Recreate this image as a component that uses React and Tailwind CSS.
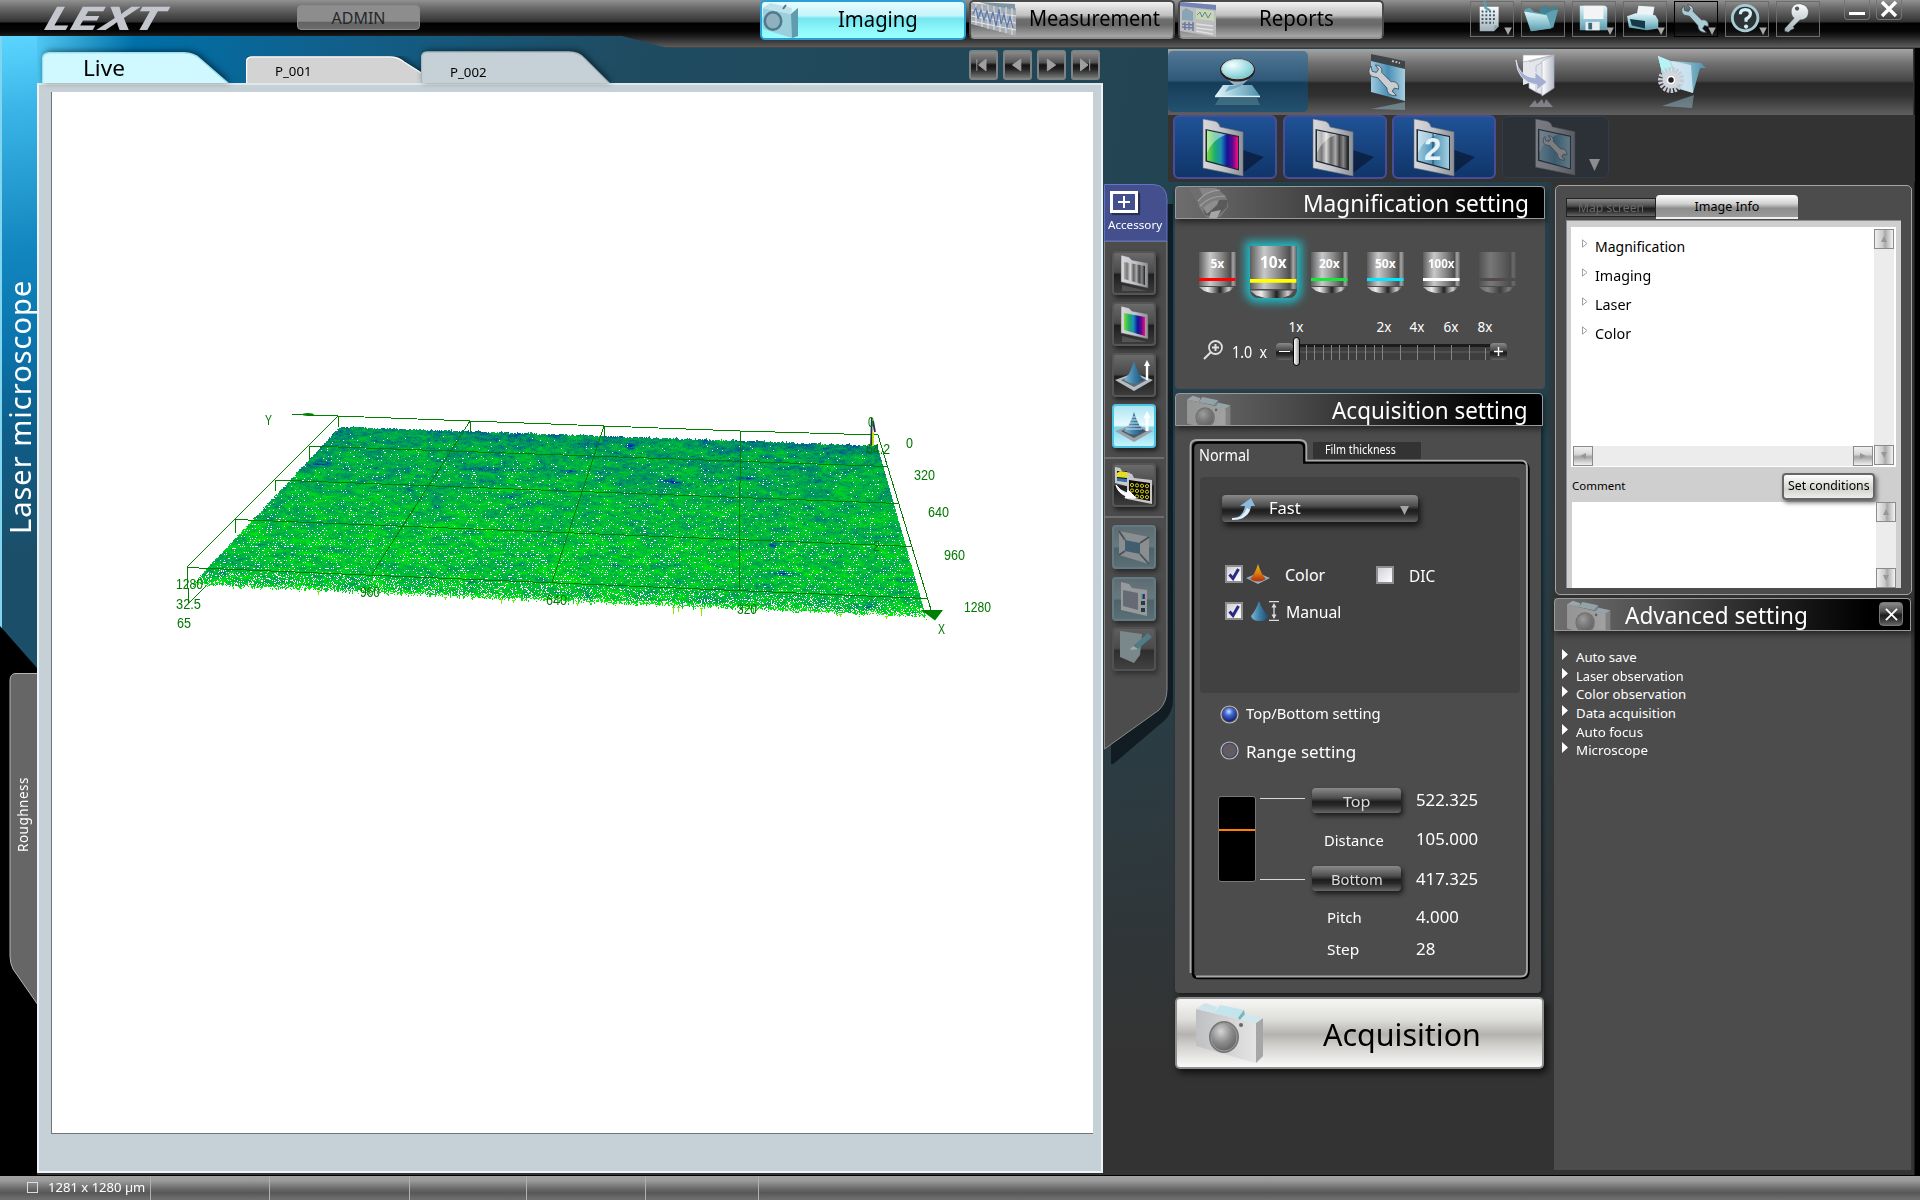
import React, { useLayoutEffect, useRef } from "react";

const ui = "font-['Noto_Sans','Open_Sans',sans-serif]";

/* Single line of text stretched or squeezed to the width of its box. */
function Fit({ className = "", children }) {
  const box = useRef(null);
  const ink = useRef(null);
  useLayoutEffect(() => {
    const w = ink.current.offsetWidth;
    if (w) ink.current.style.transform = `scaleX(${box.current.offsetWidth / w})`;
  });
  return (
    <span ref={box} className={`inline-block shrink-0 whitespace-nowrap text-left ${className}`}>
      <span ref={ink} className="inline-block origin-left whitespace-nowrap">
        {children}
      </span>
    </span>
  );
}

function Defs() {
  const lin = (id, stops, vertical = false) => (
    <linearGradient key={id} id={id} x1="0" y1="0" x2={vertical ? 0 : 1} y2={vertical ? 1 : 0}>
      {stops.map(([o, c]) => (
        <stop key={o} offset={o} stopColor={c} />
      ))}
    </linearGradient>
  );
  return (
    <svg className="absolute h-0 w-0" aria-hidden="true">
      <defs>
        {lin("frame", [[0, "#d8d8dc"], [0.5, "#c2c3c9"], [1, "#8d9096"]])}
        {lin("rainbow", [[0, "#7ddc3c"], [0.25, "#1fae6a"], [0.45, "#1b8fb4"], [0.65, "#12149a"], [0.82, "#5a0a8e"], [1, "#ff0a86"]])}
        {lin("mono", [[0, "#aaa"], [0.15, "#777"], [0.3, "#d8d8d8"], [0.45, "#666"], [0.6, "#aaa"], [0.72, "#444"], [0.85, "#888"], [1, "#222"]])}
        {lin("aqua", [[0, "#e4f7fb"], [0.5, "#93c4d4"], [1, "#4f8fa8"]])}
        {lin("aquaV", [[0, "#dff6fa"], [0.6, "#8cc3cf"], [1, "#5d98a8"]], true)}
        {lin("pane", [[0, "#9dc9dd"], [0.5, "#4a8fb6"], [1, "#a5cfe0"]])}
        {lin("silver", [[0, "#fdfdfd"], [1, "#9fb0b8"]], true)}
        {lin("page", [[0, "#ffffff"], [1, "#b4bac8"]])}
        {lin("cone", [[0, "#7fb7d6"], [0.5, "#3c7ea6"], [1, "#1d4e74"]])}
        {lin("heat", [[0, "#d8c010"], [0.5, "#e08010"], [1, "#b02c10"]], true)}
        {lin("barrel", [[0, "#5c5c5c"], [0.3, "#c9c9c9"], [0.6, "#8a8a8a"], [0.85, "#4e4e4e"], [0.92, "#a8a8a8"], [1, "#5e5e5e"]])}
        {lin("tip", [[0, "#999"], [0.25, "#eee"], [0.6, "#222"], [0.85, "#ccc"], [1, "#555"]])}
        {lin("camFace", [[0, "#bfc0c2"], [1, "#e4e4e4"]])}
        <radialGradient id="lensG" cx=".38" cy=".3" r=".8">
          <stop offset="0" stopColor="#d5d5d5" />
          <stop offset=".5" stopColor="#8d8d8d" />
          <stop offset="1" stopColor="#5b5b5b" />
        </radialGradient>
        <radialGradient id="bubble" cx=".35" cy=".3" r=".8">
          <stop offset="0" stopColor="#f4ffff" />
          <stop offset="1" stopColor="#67c6d0" />
        </radialGradient>
      </defs>
    </svg>
  );
}

function Folder({ fill, className, shadow = true, children }) {
  return (
    <svg viewBox="0 0 63 59" className={className}>
      {shadow && <path d="M41 32L62 39L41 55Z" fill="#0a1d3c" opacity=".8" />}
      <path d="M1 1L14 3.500Q17 5 18 9L41 14V58L1 50Z" fill="url(#frame)" stroke="#6f7278" strokeWidth=".6" />
      <path d="M3.500 11L37 18V52.500L3.500 43.500Z" fill="#1c2a38" />
      <path d="M5 12.500L36 19V51L5 42.500Z" fill={`url(#${fill})`} />
      <path d="M5 12.500L24 16.500Q10 22 5 35Z" fill="#fff" opacity=".45" />
      {children}
    </svg>
  );
}

const wrenchD =
  "M3 1C0 4 0 9 4 11L9 12L18 22C18 27 22 30 27 29L23 25L25 22L29 23C30 18 26 15 22 16L13 7C14 3 11 0 7 0L10 4L8 7L4 6Z";

function Wrench({ x = 0, y = 0, s = 1, fill = "#c4c9ce" }) {
  return <path transform={`translate(${x} ${y}) scale(${s})`} d={wrenchD} fill={fill} stroke="#404850" strokeWidth=".8" />;
}

function Camera({ className, crop }) {
  return (
    <svg viewBox="0 0 68 62" preserveAspectRatio={crop ? "xMidYMin slice" : "xMidYMid meet"} className={className}>
      <path d="M0 7L60 21V61L0 44Z" fill="url(#camFace)" />
      <path d="M60 21L67 16V54L60 61Z" fill="#a5a6a8" />
      <path d="M0 7L9 1L21 5L18 11Z" fill="#cfe4ea" />
      <path d="M18 11L24 3L48 8L42 16Z" fill="#c2e4ec" />
      <path d="M42 16L48 8L49 13L44 18Z" fill="#7fb0be" />
      <path d="M44 18L49 12L67 16L60 21Z" fill="#cfe8ee" />
      <ellipse cx="28" cy="35" rx="15" ry="16" fill="#777" />
      <ellipse cx="28" cy="35" rx="13" ry="14" fill="url(#lensG)" stroke="#999" />
      <circle cx="45" cy="23" r="2" fill="#666" />
    </svg>
  );
}

/* ---------- title bar ---------- */

function ModeButton({ label, active, icon, w, pad = "" }) {
  return (
    <div
      className={
        "relative flex w-[206px] items-center rounded-[5px] border-2 " +
        (active
          ? "h-10 border-[#2a9fd6] bg-[linear-gradient(180deg,#e8fcff_0%,#c4f4fb_38%,#74e4ee_46%,#8cf8fa_75%,#9effff_100%)]"
          : "h-[39px] border-[#4a4a4a] border-b-[#909090] bg-[linear-gradient(180deg,#f2f2f2_0%,#c0c0c0_38%,#6e6e6e_50%,#6a6a6a_65%,#a8a8a8_100%)]")
      }
    >
      <svg viewBox="0 0 46 36" className="h-9 w-[46px] shrink-0">
        {icon}
      </svg>
      <div className={`-mt-[3px] flex flex-1 justify-center text-[21px] leading-[28px] text-black ${pad} ${ui}`}>
        <Fit className={w}>{label}</Fit>
      </div>
    </div>
  );
}

const modeIcons = {
  cam: (
    <g>
      <path d="M1 6L29 12L36 6V34L30 36L1 27Z" fill="#9ccfdc" />
      <path d="M29 12L36 6V34L30 36Z" fill="#5f9cb0" />
      <path d="M1 6L8 1L30 6L29 12Z" fill="#bfe2ea" />
      <ellipse cx="11" cy="19" rx="9.500" ry="10" fill="#50788a" />
      <ellipse cx="11" cy="19" rx="7" ry="7.500" fill="#8fb0be" />
      <path d="M21 7L24 3" stroke="#507888" strokeWidth="2" />
    </g>
  ),
  chart: (
    <g>
      <path d="M0 1L45 6V34L0 22Z" fill="#a8adb4" />
      <path d="M8 0L44 2V8L18 3Z" fill="#7d98a4" />
      <path d="M5 2V23M11 3V25M17 3V27M23 4V28M29 5V30M35 5V31M41 6V33M0 8L45 14M0 14L45 21M0 19L45 28" stroke="#e4e6ea" strokeWidth="1" />
      <path d="M2 12L5 6L7 17L10 8L13 18L16 9L19 20L22 10L25 24L28 7L30 22L33 12L36 25L39 15L42 26" fill="none" stroke="#5878b0" strokeWidth="1.200" />
    </g>
  ),
  report: (
    <g>
      <path d="M0 0L36 3V35L0 29Z" fill="#bcbdc0" />
      <path d="M0 0L36 3V8L0 4Z" fill="#7284b4" />
      <path d="M2 9L6 6L13 10V19L2 18Z" fill="#87a5b4" />
      <path d="M16 7L34 9V19L16 17Z" fill="#c9d6b4" />
      <path d="M17 13L20 10L22 15L25 10L28 16L31 11" fill="none" stroke="#60849a" />
      <path d="M2 22L13 23M2 25L13 26M5 20V28M9 20V28M13 20V29" stroke="#6a7a9c" strokeWidth="1.500" />
      <path d="M16 22L33 24M16 26L33 28M16 29L33 32" stroke="#e0e0e0" strokeWidth="1.500" />
    </g>
  ),
};

function ToolButton({ children, arrow, className = "border-[#6c6c6c]" }) {
  return (
    <div className={`relative h-9 w-11 border bg-[#ffffff08] ${className}`}>
      <svg viewBox="0 0 44 36" className="h-full w-full overflow-visible">
        {children}
        {arrow && <path d="M35 27H43L39 35Z" fill="#a8a8a8" />}
      </svg>
    </div>
  );
}

function Header() {
  return (
    <header className="relative z-10 flex h-12 shrink-0 items-start bg-[linear-gradient(180deg,#919191_0,#6a6a6a_8px,#3a3a3a_20px,#303030_22px,#000_23px,#050505_31px,#1c1c1c_36px,#5c5c5c_47px,#303030_48px)] [clip-path:polygon(0_0,1920px_0,1920px_48px,668px_48px,622px_36px,0_36px)]">
      <div className="ml-[47px] mt-[1px] w-[125px] skew-x-[-18deg]">
        <Fit className="w-[118px] font-['Inter','Liberation_Sans',sans-serif] text-[32px] font-extrabold italic leading-[36px] text-[#c4c6cd]">
          LEXT
        </Fit>
      </div>
      <div className={`ml-[125px] mt-[5px] flex h-[25px] w-[123px] items-center justify-center rounded-sm border border-[#8a8a8a] bg-[linear-gradient(180deg,#8d8d8d_0%,#8d8d8d_66%,#636363_70%,#6c6c6c_100%)] text-[16px] leading-[22px] text-[#26262b] ${ui}`}>
        <Fit className="w-[54px]">ADMIN</Fit>
      </div>
      <nav className="ml-[340px] flex gap-[3px]">
        <ModeButton label="Imaging" active icon={modeIcons.cam} w="w-[80px]" pad="pr-4" />
        <ModeButton label="Measurement" icon={modeIcons.chart} w="w-[131px]" pad="pr-[2px]" />
        <ModeButton label="Reports" icon={modeIcons.report} w="w-[75px]" pad="pr-4" />
      </nav>
      <div className="ml-[86px] mt-px flex gap-[7px]">
        <ToolButton arrow>
          <path d="M9 5H29V26L24 31H9Z" fill="url(#silver)" />
          <path d="M24 31V25H29Z" fill="#8fa4ac" />
          <path d="M11 10H27M11 14H27M11 18H27M11 22H24" stroke="#3c5a68" strokeWidth="2" strokeDasharray="2 2" />
          <path d="M14 -1L15 6L20 9" stroke="#58a0b4" strokeWidth="2.500" fill="none" />
        </ToolButton>
        <ToolButton>
          <path d="M18 8L25 3L27 8L36 4L33 14L20 16Z" fill="#3f8494" />
          <path d="M2 8L8 6L12 10L24 13L32 9L38 8L33 27L10 31Z" fill="#5e9fb0" />
          <path d="M2 10L26 14L31 28L9 31Z" fill="url(#aquaV)" />
        </ToolButton>
        <ToolButton arrow>
          <path d="M7 4H34L36 6V30H7Z" fill="url(#aquaV)" />
          <path d="M11 4H32V18H11Z" fill="#f4f4f6" />
          <path d="M13 21H28V30H13Z" fill="#e8eef0" />
          <path d="M16 22H20V29H16Z" fill="#35697c" />
        </ToolButton>
        <ToolButton arrow>
          <path d="M15 4L32 5L30 17L13 15Z" fill="#eef4f6" />
          <path d="M3 15L12 12L33 14L36 19V28L24 30L5 27Z" fill="url(#aquaV)" />
          <path d="M6 18L22 20V28L8 25Z" fill="#163a48" />
        </ToolButton>
        <ToolButton arrow className="border-black">
          <Wrench x={6} y={3} s={1} fill="#a9cbd4" />
        </ToolButton>
        <ToolButton arrow>
          <circle cx="20" cy="17" r="13.500" fill="#2c3438" stroke="#a9ccd4" strokeWidth="3" />
          <path d="M15 13Q15 8 20 8Q26 8 25.500 13Q25 16 21 18V21" fill="none" stroke="#d5eef2" strokeWidth="3.400" />
          <circle cx="21" cy="26" r="2.200" fill="#d5eef2" />
        </ToolButton>
        <ToolButton>
          <path d="M15 8Q17 1 25 2Q34 4 33 12Q32 19 24 19L17 26L18 28L14 30L12 32L8 31V28L18 17Q14 14 15 8Z" fill="url(#silver)" stroke="#444" strokeWidth=".5" />
          <circle cx="21" cy="7" r="2.200" fill="#555" />
        </ToolButton>
      </div>
      <div className="ml-[24px] flex gap-[6px]">
        <div className="h-5 w-[26px] rounded-b border border-t-0 border-[#747474] px-[4px] pt-[12px]">
          <div className="h-[3px] bg-white" />
        </div>
        <div className="h-5 w-[26px] rounded-b border border-t-0 border-[#747474]">
          <svg viewBox="0 0 24 19" className="h-full w-full">
            <path d="M5 2L19 16M19 2L5 16" stroke="#fff" strokeWidth="3.400" />
          </svg>
        </div>
      </div>
    </header>
  );
}

/* ---------- left rail ---------- */

function Rail() {
  return (
    <aside className={`-mt-3 flex w-[37px] shrink-0 flex-col text-white ${ui}`}>
      <div className="h-[637px] bg-black">
        <div className="flex h-[632px] items-start justify-center border-l-2 border-[#7fd6ee] bg-[linear-gradient(172deg,#5cd6ff_0%,#3ab4e6_12%,#1286bf_34%,#0a72aa_50%,#0e5e8a_62%,#1b4e68_82%)] [clip-path:polygon(0_0,100%_0,100%_100%,0_590px)]">
          <div className="mt-[243px] flex h-[256px] w-[35px] rotate-180 items-center justify-center text-[29px] leading-[35px] [writing-mode:vertical-rl]">
            <span className="whitespace-nowrap tracking-[1px]">Laser microscope</span>
          </div>
        </div>
      </div>
      <div className="relative flex h-[502px] items-center justify-center bg-black">
        <svg viewBox="0 0 37 332" className="absolute left-0 top-0 h-[332px] w-[37px]">
          <path d="M38 .5H15Q10 1 10 8V283Q10 290 13 296L38 332Z" fill="#666" stroke="#b4b4b4" />
        </svg>
        <div className="relative -mt-[219px] ml-[8px] flex h-[90px] w-6 rotate-180 items-center justify-center text-[13.500px] leading-6 [writing-mode:vertical-rl]">
          <span className="whitespace-nowrap tracking-[0.5px]">Roughness</span>
        </div>
      </div>
    </aside>
  );
}

/* ---------- surface plot ---------- */

const streaks = [
  [303, 463, 38, 3, 0.5], [363, 467, 18, 2, 0.6], [457, 469, 110, 2.5, 0.5], [560, 471, 14, 2, 1],
  [607, 435, 18, 2.5, 0.8], [662, 481, 18, 2.5, 0.9], [733, 478, 27, 2, 0.6], [803, 481, 22, 2, 0.4],
  [607, 565, 110, 2.5, 0.5], [767, 573, 36, 2, 1], [887, 579, 30, 2.5, 0.8], [503, 555, 54, 3, 0.35],
  [310, 550, 46, 2.5, 0.4], [228, 540, 22, 3, 0.5], [755, 587, 20, 3, 0.4], [628, 446, 5, 3, 0.9],
  [810, 460, 40, 4, 0.3], [845, 505, 12, 3, 0.4], [467, 581, 8, 3, 0.9], [480, 445, 60, 4, 0.3],
  [220, 571, 6, 5, 0.6], [405, 488, 8, 3, 0.6], [500, 496, 20, 4, 0.4], [865, 606, 8, 3, 0.7],
  [320, 445, 40, 5, 0.3], [770, 545, 6, 3, 0.8], [430, 505, 10, 4, 0.4], [750, 508, 30, 3, 0.3],
  [690, 600, 40, 3, 0.3], [270, 555, 30, 3, 0.35],
];

function paintSurface(canvas) {
  const W = 760, H = 220, X0 = 180, Y0 = 415;
  const ctx = canvas.getContext("2d");
  const img = ctx.createImageData(W, H);
  let seed = 90210;
  const rnd = () => {
    seed = (seed * 1664525 + 1013904223) >>> 0;
    return seed / 4294967296;
  };
  const lattice = Array.from({ length: 65536 }, rnd);
  const at = (i, j) => lattice[((j & 255) << 8) | (i & 255)];
  const smooth = (x, y) => {
    const i = Math.floor(x), j = Math.floor(y);
    const u = x - i, v = y - j;
    return (at(i, j) * (1 - u) + at(i + 1, j) * u) * (1 - v) + (at(i, j + 1) * (1 - u) + at(i + 1, j + 1) * u) * v;
  };
  const ramp = [[10, 20, 215], [0, 80, 155], [0, 132, 112], [0, 172, 72], [0, 204, 40], [0, 238, 8]];
  const put = (x, y, c) => {
    const k = (y * W + x) * 4;
    img.data[k] = c[0];
    img.data[k + 1] = c[1];
    img.data[k + 2] = c[2];
    img.data[k + 3] = 255;
  };
  for (let px = 0; px < W; px++) {
    const jTop = Math.round(rnd() * 1.6);
    const jBot = Math.round(rnd() * rnd() * 4);
    for (let py = 0; py < H; py++) {
      const x = px + X0, y = py + Y0;
      const top = 427 + (x - 338) * 0.0352 - jTop;
      const bottom = 585 + (x - 205) * 0.0444 + jBot - 1;
      const left = 338 - (y - 427) * 0.938 + rnd() * 2;
      const right = 877 + (y - 446) * 0.2865;
      if (y < top || y > bottom || x < left || x > right) continue;
      const d = Math.min(1, Math.max(0, (y - top) / (bottom - top)));
      let t = 0.53 + 0.19 * Math.min(1, d * 1.4);
      t += (smooth(x / 15, y / 4) - 0.5) * 0.3 + (smooth(x / 4 + 40, y / 1.6 + 80) - 0.5) * 0.36 + (rnd() - 0.5) * 0.2;
      if (y - top < 9) t -= 0.08;
      for (const [sx, sy, sw, sh, amt] of streaks) {
        const dx = (x - sx - sw / 2) / (sw / 2 + 3), dy = (y - sy) / (sh + 1);
        const q = 1 - dx * dx - dy * dy;
        if (q > 0) t -= amt * 0.55 * q * (0.15 + 1.1 * smooth(x / 3, y));
      }
      if (y > bottom - 4) t += 0.2;
      t = Math.min(0.999, Math.max(0, t)) * 5;
      const i = Math.floor(t), f = t - i;
      const c = ramp[i].map((a, n) => Math.round(a + (ramp[i + 1][n] - a) * f));
      const hole = y - top > 5 && rnd() < 0.018 + 0.16 * d && ((y & 1) === 0 || d > 0.9);
      const fringe = y > bottom - 4 && rnd() < 0.2;
      put(px, py, hole || fringe ? [255, 255, 255] : c);
    }
  }
  for (const [x, len] of [[318, 4], [501, 5], [577, 3], [673, 7], [678, 5], [701, 8], [513, 3], [886, 3], [840, 3], [445, 3]]) {
    const b = Math.round(586 + (x - 205) * 0.0444);
    for (let k = 0; k < len; k++) put(x - X0, b - Y0 + k, [130, 235, 0]);
    put(x - X0 - 1, b - Y0, [90, 240, 0]);
    put(x - X0 + 1, b - Y0, [90, 240, 0]);
  }
  ctx.putImageData(img, 0, 0);
}

const axisLabels = [
  [906, 448, "0", 7], [914, 480, "320", 21], [928, 517, "640", 21], [944, 560, "960", 21], [964, 612, "1280", 27],
  [868, 427, "0", 6], [866, 454, "64.2", 24], [873, 551, "2", 7], [176, 589, "1280", 27], [176, 609, "32.5", 25],
  [177, 628, "65", 14], [360, 597, "960", 20], [546, 605, "640", 21], [737, 614, "320", 20],
  [265, 425, "Y", 7], [938, 634, "X", 7],
];

function SurfacePlot() {
  const ref = useRef(null);
  useLayoutEffect(() => paintSurface(ref.current), []);
  return (
    <div className="relative h-full w-full bg-white">
      <canvas ref={ref} width="760" height="220" className="absolute left-[128px] top-[323px]" />
      <svg viewBox="52 92 1040 1040" className="absolute left-0 top-0 h-[1040px] w-[1040px]">
        <path
          d="M292 414.500L338 416L470 421L604 426L740 431L878 435M309 446L887 466.500M275 480L899 503.500M235 519.500L912 546.500M187 567.500L927 598.500M338 416L187 567M470 421L372 574M604 426L552 582M740.500 431L739 591M878 435L932 613M338.500 416V427M470.500 421V432M604.500 426V437M309.500 446V459M275.500 480V491M235.500 519V533M187.500 567V580L189 603L206 586"
          fill="none"
          stroke="#008000"
          strokeWidth="1"
          shapeRendering="crispEdges"
        />
        <ellipse cx="308" cy="414.500" rx="6" ry="1.500" fill="#008000" />
        <path d="M921 610H943L935 620.500Z" fill="#008000" />
        <path d="M871 420L870 446H873L872 418Z" fill="#603090" />
        <path d="M872 430L871 446H874L874 433Z" fill="#c8e010" />
        <path d="M873 421L875 432" stroke="#302060" strokeWidth="1.800" />
        <path d="M871.500 418V445" stroke="#0a4a2a" strokeWidth="1.200" />
        {axisLabels.map(([x, y, s, w]) => (
          <text key={`${x}-${y}`} x={x} y={y} textLength={w} lengthAdjust="spacingAndGlyphs" fill="#007800" className="font-['Liberation_Sans',sans-serif] text-[14px]">
            {s}
          </text>
        ))}
      </svg>
    </div>
  );
}

function DocTab({ className, path, stroke, fill, w, children }) {
  return (
    <div className={`relative ${className} ${ui} text-black`}>
      <svg viewBox={`0 0 ${w} 32`} preserveAspectRatio="none" className="absolute inset-0 h-full w-full drop-shadow-[2px_-1px_3px_rgba(0,0,0,0.55)]">
        <path d={path} fill={fill} stroke={stroke} strokeWidth="1.400" />
      </svg>
      <div className="relative">{children}</div>
    </div>
  );
}

function Workspace() {
  const nav = [
    <path key="a" d="M7 8V22M18 8V22L9 15Z" />,
    <path key="b" d="M19 8V22L9 15Z" />,
    <path key="c" d="M10 8V22L20 15Z" />,
    <path key="d" d="M9 8V22L18 15ZM20 8V22" />,
  ];
  return (
    <section className="flex w-[1066px] shrink-0 flex-col">
      <div className="flex h-[35px] items-end">
        <DocTab className="ml-[5px] h-[31px] w-[188px] pl-[41px] pt-[1px] text-[21px] leading-[30px]" w={188} fill="#d0f8ff" stroke="#9fe0ee" path="M.5 33V7Q1 1 7 .8H142Q152 1 158 7L187 33Z">
          <Fit className="w-[42px]">Live</Fit>
        </DocTab>
        <DocTab className="ml-[16px] h-[27px] w-[175px] overflow-hidden pl-[29px] pt-[7px] text-[12.500px] leading-[18px]" w={175} fill="#d3d3d3" stroke="#fff" path="M.5 33V6Q1 1 6 1H144Q152 1 158 7L178 22V33Z">
          <Fit className="w-[37px]">P_001</Fit>
        </DocTab>
        <DocTab className="h-8 w-[190px] pl-[29px] pt-[13px] text-[12.500px] leading-[18px]" w={190} fill="#c5d1d6" stroke="#a9b9bf" path="M.5 33V6Q1 1 7 1H148Q158 1 164 8L189 33Z">
          <Fit className="w-[37px]">P_002</Fit>
        </DocTab>
        <div className="mb-[3px] ml-auto mr-[3px] flex gap-[5px]">
          {nav.map((n, i) => (
            <div key={i} className="h-[30px] w-[29px] rounded-[3px] border-2 border-[#7d8284] bg-[linear-gradient(180deg,#8a8a8a_0%,#555_40%,#141414_50%,#222_65%,#777_100%)]">
              <svg viewBox="0 0 30 30" className="h-full w-full" fill="#a0a0a0" stroke="#a0a0a0" strokeWidth="1.200">
                {n}
              </svg>
            </div>
          ))}
        </div>
      </div>
      <div className="h-[1090px] border-2 border-[#eef3f5] border-t-[#dfe8ea] bg-[#c5d1d6] pl-[12px] pt-[7px]">
        <div className="h-[1042px] w-[1042px] border-b border-l border-[#6f7678]">
          <SurfacePlot />
        </div>
      </div>
    </section>
  );
}

/* ---------- accessory strip ---------- */

function StripButton({ className = "", tone = "dark", children }) {
  const tones = {
    dark: "border-[#555] bg-[linear-gradient(180deg,#6a6a6a_0%,#4a4a4a_48%,#1e1e1e_54%,#3c3c3c_100%)]",
    lit: "border-[#4bc4e4] bg-[linear-gradient(180deg,#aee4f2_0%,#e6fbff_48%,#7cd6ec_54%,#c8f4fc_100%)]",
    off: "border-[#6b8590] bg-[linear-gradient(180deg,#62757c_0%,#6f858c_48%,#4f6872_54%,#5f7880_100%)]",
  };
  return (
    <div className={`h-11 w-11 rounded-[4px] border-2 shadow-[2px_3px_5px_rgba(0,0,0,0.6)] ${tones[tone]} ${className}`}>
      <svg viewBox="0 0 40 40" className="h-full w-full">
        {children}
      </svg>
    </div>
  );
}

const miniFolder = (fill) => (
  <g>
    <path d="M7 2L15 4L18 7L34 10V35L7 29Z" fill="url(#frame)" stroke="#555" strokeWidth=".5" />
    <path d="M10 9L31 13V32L10 26Z" fill={`url(#${fill})`} />
    <path d="M8 32L33 38H8Z" fill="#fff" opacity=".15" />
  </g>
);

function Accessory() {
  return (
    <section className="relative mt-[136px] h-[566px] w-[65px] shrink-0">
      <svg viewBox="0 0 75 580" className="absolute left-0 top-0 h-[580px] w-[75px]">
        <path d="M8 20H70V515Q70 528 62 536L8 582Z" fill="#0a1218" opacity=".75" />
        <path d="M1.500 57H64V505Q64 518 56 526L1.500 565Z" fill="#4c4c4c" stroke="#8a8a8a" />
        <path d="M1.500 57V.5H50Q64 1 64 16V57Z" fill="#44508e" stroke="#6474c0" />
        <path d="M2 274H61M2 333H61" stroke="#6e6e6e" strokeWidth="2" />
      </svg>
      <div className={`relative flex flex-col items-start text-white ${ui}`}>
        <div className="ml-[7px] mt-[7px] flex h-[22px] w-7 items-center justify-center border-[3px] border-white shadow-[2px_2px_1px_rgba(0,0,0,0.4)]">
          <svg viewBox="0 0 12 12" className="h-3 w-3">
            <path d="M0 6H12M6 0V12" stroke="#fff" strokeWidth="2" />
          </svg>
        </div>
        <div className="ml-[5px] mt-[2px] text-[11px] leading-[20px]">
          <Fit className="w-[54px]">Accessory</Fit>
        </div>
        <div className="ml-[9px] mt-[16px] flex flex-col gap-[7px]">
          <StripButton>{miniFolder("mono")}</StripButton>
          <StripButton>{miniFolder("rainbow")}</StripButton>
          <StripButton>
            <path d="M1 25L20 18L39 25L20 36Z" fill="#b7bcc2" />
            <path d="M7 25L20 20L33 25L20 32Z" fill="#5c6b76" />
            <path d="M10 25Q16 20 20 6Q24 20 30 25Q20 32 10 25Z" fill="url(#cone)" />
            <path d="M33 25V10" stroke="#fff" strokeWidth="2.400" />
            <path d="M30 11L33 5L36 11Z" fill="#fff" />
          </StripButton>
          <StripButton tone="lit">
            <path d="M1 25L20 18L39 25L20 36Z" fill="#9ba1a8" />
            <path d="M7 25L20 20L33 25L20 32Z" fill="#4c5b66" />
            <path d="M10 25Q16 20 20 6Q24 20 30 25Q20 32 10 25Z" fill="url(#cone)" />
            <path d="M18 11H22M17 14H23M16 17H24M14 20H26M12 23H28" stroke="#d8e4ea" />
            <path d="M33 25V10" stroke="#fff" strokeWidth="3" />
            <path d="M29.500 12L33 5L36.500 12Z" fill="#fff" />
          </StripButton>
        </div>
        <StripButton className="ml-[9px] mt-[15px]">
          <path d="M1 2L6 3L8 6L16 8V22L1 18Z" fill="#c9c9c9" />
          <path d="M3 6L13 6V17L3 15Z" fill="#111" />
          <path d="M3 8L6 6L13 7V13L3 12Z" fill="#e6dc20" />
          <path d="M3 13L13 14V17L3 16Z" fill="#3070b0" />
          <path d="M13 8L18 9L20 13L38 15V39L13 34Z" fill="#c6c6ca" />
          <path d="M15 15L36 18V36L15 32Z" fill="#0a0a0a" />
          {[20, 25.5, 31].map((y) =>
            [18, 23, 28, 33].map((x) => (
              <circle key={`${x}-${y}`} cx={x} cy={y + (x - 18) * 0.08} r="1.600" fill="none" stroke="#d8d010" strokeWidth="1" />
            ))
          )}
          <path d="M2 20Q6 26 13 28L14 25L22 33L11 33L12 31Q4 28 2 20Z" fill="#fff" stroke="#fff" />
        </StripButton>
        <div className="ml-[9px] mt-[18px] flex flex-col gap-[8px] opacity-80">
          <StripButton tone="off">
            <path d="M5 4L35 10V37L5 28Z" fill="#9a9fa2" />
            <path d="M11 13L26 16V27L11 24Z" fill="#3f6378" />
            <path d="M5 4L11 13M35 10L26 16M35 37L26 27M5 28L11 24" stroke="#4a5358" strokeWidth="1.800" />
          </StripButton>
          <StripButton tone="off">
            <path d="M7 3L15 5L18 9L33 11V37L7 31Z" fill="#a9aeb2" />
            <path d="M9 11L24 14V31L9 27Z" fill="#6c7280" />
            <path d="M27 15H31V20H27Z" fill="url(#rainbow)" />
            <path d="M27 22H31V26H27ZM27 29H31V33H27Z" fill="#234" />
          </StripButton>
          <StripButton className="-mt-[2px] opacity-80">
            <path d="M6 2L28 5L26 26L20 34L6 28Z" fill="#97aab0" />
            <path d="M19 17L34 4L38 8L24 20Z" fill="#5596a6" />
            <path d="M19 17L24 20L16 21Z" fill="#ddd" />
          </StripButton>
        </div>
      </div>
    </section>
  );
}

/* ---------- right-hand controls ---------- */

const barDark = "bg-[linear-gradient(180deg,#8a8a8a_0%,#4e4e4e_40%,#1d1d1d_55%,#2a2a2a_70%,#666_100%)]";

function PanelHeader({ className = "", children }) {
  return (
    <div className={`relative flex h-[33px] items-center rounded-t-[4px] border border-[#9a9a9a] bg-[linear-gradient(90deg,#6e6e6e_0%,#4c4c4c_30%,#1c1c1c_65%,#000_88%)] shadow-[1px_3px_6px_rgba(0,0,0,0.55)] ${className}`}>
      {children}
    </div>
  );
}

function Lens({ label, ring, large, off }) {
  const size = large
    ? "-mx-[5px] h-[52px] w-[47px] shadow-[0_0_8px_5px_#22b6c0] rounded-b-[8px] bg-[#4c4c4c]"
    : "h-[41px] w-[37px]";
  return (
    <div className={`relative ${size} ${off ? "opacity-35" : ""}`}>
      <svg viewBox="0 0 37 41" preserveAspectRatio="none" className="h-full w-full">
        <path d="M0 0H37V34H0Z" fill="url(#barrel)" />
        <path d="M0 35H35L31 39L25 41H12L5 39Z" fill="url(#tip)" />
        <path d="M0 26H36.500V29H0Z" fill={ring} />
      </svg>
      <div className={`absolute inset-x-0 text-center font-bold text-white ${ui} ${large ? "top-[5px] text-[16px] leading-[22px]" : "top-[3px] text-[12px] leading-[18px]"}`}>
        <Fit className={label.length > 3 ? "w-[27px]" : label.length > 2 ? (large ? "w-[27px]" : "w-[21px]") : "w-[14px]"}>{label}</Fit>
      </div>
    </div>
  );
}

function Magnification() {
  return (
    <section className={`flex h-[203px] w-[370px] flex-col rounded-b bg-[#4c4c4c] text-white ${ui}`}>
      <PanelHeader className="justify-end overflow-hidden pr-[15px] pt-[2px] text-[23.500px] leading-[31px]">
        <svg viewBox="0 0 42 30" className="-mt-[2px] ml-[13px] mr-auto h-[30px] w-[42px] shrink-0">
          <path d="M0 0H27L36 8L12 20Z" fill="#848484" />
          <path d="M0 0H10L18 16L12 20Z" fill="#6e6e6e" />
          <path d="M9 12Q16 3 30 2L37 9Q40 14 39 19L31 29H17L10 19Z" fill="#7c7c7c" />
          <path d="M9 13Q17 3 31 2M11 18Q20 8 36 8" fill="none" stroke="#a2a2a2" strokeWidth="1.200" />
          <path d="M14 20Q24 10 39 12L38 19L28 29L16 27Z" fill="#5a5a5a" />
          <path d="M14 20Q22 12 30 12L28 17L18 26Z" fill="#8e8e8e" />
          <path d="M22 24L32 22L28 30H20Z" fill="#a6a6a6" />
        </svg>
        <Fit className="w-[226px]">Magnification setting</Fit>
      </PanelHeader>
      <div className="ml-6 mt-[27px] flex h-[52px] items-center gap-[19px]">
        <Lens label="5x" ring="#ff0000" />
        <Lens label="10x" ring="#ffff00" large />
        <Lens label="20x" ring="#12e83a" />
        <Lens label="50x" ring="#00e8ff" />
        <Lens label="100x" ring="#ffffff" />
        <Lens label="" ring="#5c4a44" off />
      </div>
      <div className="ml-[104px] mt-[21px] flex h-4 items-center text-center text-[13.500px] leading-4">
        <div className="w-[34px]">1x</div>
        <div className="ml-[54px] w-[34px]">2x</div>
        <div className="ml-[-1px] w-[34px]">4x</div>
        <div className="w-[34px]">6x</div>
        <div className="w-[34px]">8x</div>
      </div>
      <div className="ml-7 mt-[2px] flex h-[29px] items-center">
        <svg viewBox="0 0 20 20" className="-mt-1 h-5 w-5" fill="none" stroke="#e0e0e0" strokeWidth="1.800">
          <circle cx="12.500" cy="7.500" r="6.500" />
          <path d="M8 12L1 19M9 7.500H16M12.500 4V11" strokeWidth="2" />
        </svg>
        <div className="ml-[9px] text-[15.500px] leading-5">
          <Fit className="w-[35px]">1.0&nbsp; x</Fit>
        </div>
        <div className="relative ml-[9px] flex h-4 items-center rounded-sm">
          <div className={`flex h-[17px] w-[17px] items-center justify-center rounded-sm ${barDark}`}>
            <div className="h-px w-[11px] bg-white" />
          </div>
          <svg viewBox="0 0 197 16" className="h-4 w-[197px]">
            <path d="M0 0H197V16H0Z" fill="#3e3e3e" />
            <path d="M0 0H197V3H0Z" fill="#1c1c1c" />
            <path d="M0 8H197" stroke="#606060" />
            <path d="M13.500 1V16M21.500 1V16M30.500 1V16M38.500 1V16M46.500 1V16M55.500 1V16M63.500 1V16M72.500 1V16M81.500 1V16M89.500 1V16M107.500 1V16M124.500 1V16M141.500 1V16M158.500 1V16M176.500 1V16M192.500 4V16" stroke="#858585" />
          </svg>
          <div className={`flex h-[17px] w-[17px] items-center justify-center rounded-sm ${barDark}`}>
            <svg viewBox="0 0 10 10" className="h-[9px] w-[9px]">
              <path d="M0 5H10M5 0V10" stroke="#fff" strokeWidth="1.600" />
            </svg>
          </div>
          <div className="absolute -top-[7px] left-[17px] h-[29px] w-[7px] rounded-full border-[1.5px] border-black bg-[linear-gradient(90deg,#fff,#9a9a9a)]" />
        </div>
      </div>
    </section>
  );
}

function Check({ on }) {
  return (
    <div className="h-[18px] w-[18px] shrink-0 border-2 border-[#8e8e8e] bg-[linear-gradient(135deg,#cfd0d8,#fff)]">
      {on && (
        <svg viewBox="0 0 14 14" className="h-full w-full">
          <path d="M2.500 7.500L6 11.500L11.500 2" fill="none" stroke="#2a2a84" strokeWidth="3" />
        </svg>
      )}
    </div>
  );
}

function Radio({ on }) {
  return (
    <svg viewBox="0 0 20 20" className="h-[19px] w-[19px] shrink-0">
      <defs>
        <radialGradient id="ball" cx=".45" cy=".3" r=".7">
          <stop offset="0" stopColor="#c8e4ff" />
          <stop offset=".4" stopColor="#4468d8" />
          <stop offset="1" stopColor="#101c68" />
        </radialGradient>
      </defs>
      <circle cx="10" cy="10" r="9" fill="#5a5458" stroke="#bdbdbd" strokeWidth="1.200" />
      {on ? <circle cx="10" cy="10" r="7.500" fill="url(#ball)" /> : <circle cx="10" cy="10" r="7.500" fill="#625c60" stroke="#3c4674" />}
    </svg>
  );
}

function SmallButton({ label, w }) {
  return (
    <div className={`flex h-[25px] w-[89px] shrink-0 items-center justify-center rounded-[4px] pt-px text-[15px] leading-[22px] text-[#dcdcdc] shadow-[2px_3px_5px_rgba(0,0,0,0.65)] ${barDark}`}>
      <Fit className={w}>{label}</Fit>
    </div>
  );
}

function Acquisition() {
  return (
    <section className={`flex h-[600px] w-[368px] flex-col text-white ${ui}`}>
      <PanelHeader className="shrink-0 overflow-visible pr-[14px] text-[23.500px] leading-[31px]">
        <Camera crop className="ml-[11px] mr-auto h-[30px] w-[44px] opacity-50" />
        <Fit className="mt-px w-[196px]">Acquisition setting</Fit>
      </PanelHeader>
      <div className="h-[567px] w-[366px] rounded-b bg-[#4c4c4c] pl-[14px] pt-[13px] shadow-[2px_2px_4px_rgba(0,0,0,0.5)]">
        <div className="relative h-[541px] w-[343px] pl-px pt-px">
          <svg viewBox="0 0 342 540" preserveAspectRatio="none" className="absolute left-0 top-0 h-full w-full" fill="none">
            <path d="M4 533V9Q4 3.500 10 3.500H109Q115 3.500 115 9V23.500H331Q338.500 23.500 338.500 31V531Q338.500 538 332 538H9Q4 538 4 533" stroke="#000" strokeWidth="2.500" />
            <path d="M1.500 533V7Q1.500 1 8 1H110Q117 1 117 7V21.500H332Q337 22 337 29V530Q337 536.500 331 536.500H7" stroke="#a8a8a8" strokeWidth="1.800" />
          </svg>
          <div className="relative flex h-[37px] items-start">
            <div className="ml-[9px] pt-[3px] text-[15.500px] leading-[24px]">
              <Fit className="w-[51px]">Normal</Fit>
            </div>
            <div className="ml-[63px] mt-[2px] h-[17px] w-[108px] bg-[#333] pl-[12px] text-[12.500px] leading-[16px]">
              <Fit className="w-[71px]">Film thickness</Fit>
            </div>
          </div>
          <div className="relative ml-[10px] h-[216px] w-[320px] rounded-[4px] bg-[#414141] pl-[22px] pt-[18px]">
            <div className={`flex h-[27px] w-[196px] items-center rounded-[4px] pl-[10px] pr-[9px] shadow-[2px_4px_6px_rgba(0,0,0,0.7)] ${barDark}`}>
              <svg viewBox="0 0 24 22" className="h-[22px] w-6">
                <path d="M0 20Q11 20 13 8L8 8L19 0L23 8L19 8Q18 21 0 22Z" fill="#8cb9dc" />
                <path d="M0 20Q11 21 15 10L18 12Q14 22 0 22Z" fill="#e4f0f8" />
              </svg>
              <div className="-mt-px ml-[13px] text-[16px] leading-[22px]">
                <Fit className="w-[32px]">Fast</Fit>
              </div>
              <svg viewBox="0 0 9 9" className="ml-auto mt-1 h-[9px] w-[9px]">
                <path d="M0 0H9L4.500 9Z" fill="#a4a4a4" />
              </svg>
            </div>
            <div className="ml-[3px] mt-[42px] flex h-5 items-center text-[16px] leading-5">
              <Check on />
              <svg viewBox="0 0 24 20" className="ml-[3px] h-5 w-6">
                <path d="M0 14L12 9L24 14L12 20Z" fill="#8fb0c4" />
                <path d="M4 15Q9 10 12 0Q15 10 20 15Q12 20 4 15Z" fill="url(#heat)" />
              </svg>
              <Fit className="ml-[15px] mt-[2px] w-[40px]">Color</Fit>
              <div className="ml-[51px] mt-px">
                <Check />
              </div>
              <Fit className="ml-[15px] mt-[3px] w-[26px]">DIC</Fit>
            </div>
            <div className="ml-[3px] mt-[17px] flex h-5 items-center text-[16px] leading-5">
              <Check on />
              <svg viewBox="0 0 30 20" className="ml-[7px] h-5 w-[30px]">
                <path d="M1 15Q6 9 9 0Q12 9 18 15Q17 20 9.500 20Q2 20 1 15Z" fill="url(#cone)" />
                <path d="M19 .7H29M19 19.300H29M24 4V16" stroke="#ddd" strokeWidth="1.300" />
                <path d="M21.500 6.500L24 2L26.500 6.500ZM21.500 13.500L24 18L26.500 13.500Z" fill="#ddd" />
              </svg>
              <Fit className="ml-[6px] mt-[2px] w-[55px]">Manual</Fit>
            </div>
          </div>
          <div className="relative ml-[30px] mt-[9px] flex h-6 items-center text-[15px] leading-6">
            <Radio on />
            <Fit className="-mt-[2px] ml-[7px] w-[135px]">Top/Bottom setting</Fit>
          </div>
          <div className="relative ml-[30px] mt-[12px] flex h-6 items-center text-[16.500px] leading-6">
            <Radio />
            <Fit className="ml-[7px] mt-[3px] w-[110px]">Range setting</Fit>
          </div>
          <div className="relative ml-7 mt-[18px] flex">
            <div className="mt-4 h-[86px] w-[38px] rounded-[3px] border border-[#777] bg-black pt-[32px]">
              <div className="h-[2px] bg-[#ff8000]" />
            </div>
            <div className="ml-1 mt-[18px] flex h-[82px] w-[45px] flex-col justify-between">
              <div className="h-px bg-[#d8d8d8]" />
              <div className="h-px bg-[#d8d8d8]" />
            </div>
            <div className="ml-[7px] grid grid-cols-[104px_1fr] grid-rows-[40px_39px_39px_38px_27px] items-center text-[16px] leading-6">
              <SmallButton label="Top" w="w-[28px]" />
              <Fit className="w-[62px]">522.325</Fit>
              <Fit className="ml-3 w-[60px] text-[14.500px]">Distance</Fit>
              <Fit className="-mt-[2px] w-[62px]">105.000</Fit>
              <SmallButton label="Bottom" w="w-[52px]" />
              <Fit className="mt-px w-[62px]">417.325</Fit>
              <Fit className="ml-[15px] w-[35px] text-[14.500px]">Pitch</Fit>
              <Fit className="w-[43px]">4.000</Fit>
              <Fit className="-mt-px ml-[15px] w-[32px] text-[14.500px]">Step</Fit>
              <Fit className="-mt-px w-[19px]">28</Fit>
            </div>
          </div>
        </div>
      </div>
    </section>
  );
}

const metalV = "bg-[linear-gradient(90deg,#f0f0f0,#c8c8c8_45%,#a8a8a8_55%,#f4f4f4)]";
const metalH = "bg-[linear-gradient(180deg,#f0f0f0,#d8d8d8_40%,#a4a4a4_55%,#f0f0f0)]";

function ScrollKey({ d, h }) {
  return (
    <div className={`flex h-5 w-5 shrink-0 items-center justify-center border border-[#8b8b8b] ${h ? metalH : metalV}`}>
      <svg viewBox="0 0 8 8" className="h-[6px] w-[6px]">
        <path d={d} fill="#969696" />
      </svg>
    </div>
  );
}

const upD = "M4 0L8 8H0Z";
const downD = "M0 0H8L4 8Z";

function ImageInfo() {
  const rows = [["Magnification", "w-[90px]"], ["Imaging", "w-[56px]"], ["Laser", "w-[37px]"], ["Color", "w-[36px]"]];
  return (
    <section className={`-mt-px ml-px h-[410px] w-[357px] rounded-[5px] border border-[#a4a4a4] bg-[#4c4c4c] pl-[10px] pt-[9px] ${ui}`}>
      <div className="flex h-[25px] items-start">
        <div className={`mt-[3px] flex h-[19px] w-[90px] items-center justify-center overflow-hidden border border-[#222] text-[12.500px] leading-4 text-[#6a6a6a] ${barDark}`}>
          <Fit className="w-[66px]">Map screen</Fit>
        </div>
        <div className="flex h-6 w-[142px] items-center justify-center rounded-t-sm border-b-2 border-[#f0f0f0] bg-[linear-gradient(180deg,#fff_0%,#d0d0d0_40%,#8e8e8e_60%,#9a9a9a_100%)] pt-[2px] text-[12.500px] leading-5 text-black">
          <Fit className="w-[65px]">Image Info</Fit>
        </div>
      </div>
      <div className="h-[368px] w-[335px] border-l border-t border-[#8c8c92] bg-[#cfcfcf] pl-1 pt-[6px] text-black">
        <div className="flex h-[240px] w-[325px] bg-white">
          <div className="flex w-[302px] flex-col">
            <ul className="h-[219px] pl-[11px] pt-[8px]">
              {rows.map(([r, w]) => (
                <li key={r} className="flex h-[29px] items-start text-[14px] leading-6">
                  <svg viewBox="0 0 6 9" className="mt-[4px] h-[9px] w-[6px]">
                    <path d="M.5 .8L5 4.500L.5 8.200Z" fill="none" stroke="#a0a0a0" />
                  </svg>
                  <Fit className={`ml-[7px] ${w}`}>{r}</Fit>
                </li>
              ))}
            </ul>
            <div className="ml-[2px] flex h-5 justify-between bg-[#ececec]">
              <ScrollKey h d="M8 0V8L0 4Z" />
              <ScrollKey h d="M0 0V8L8 4Z" />
            </div>
          </div>
          <div className="my-[2px] ml-px flex w-5 flex-col justify-between bg-[#ececec]">
            <ScrollKey d={upD} />
            <ScrollKey d={downD} />
          </div>
        </div>
        <div className="flex h-[35px] items-center pt-[3px]">
          <Fit className="ml-px w-[53px] text-[11.500px] leading-5">Comment</Fit>
          <div className="ml-auto mr-[26px] flex h-[27px] w-[93px] items-center justify-center rounded-[4px] border-2 border-[#666] bg-[linear-gradient(180deg,#fff,#d2d2ce_60%,#ecece8)] text-[12px] leading-5 shadow-[2px_3px_4px_rgba(0,0,0,0.5)]">
            <Fit className="w-[82px]">Set conditions</Fit>
          </div>
        </div>
        <div className="ml-px flex h-[86px] w-[324px] justify-end bg-white">
          <div className="flex w-5 flex-col justify-between bg-[#ececec]">
            <ScrollKey d={upD} />
            <ScrollKey d={downD} />
          </div>
        </div>
      </div>
    </section>
  );
}

function Advanced() {
  const rows = [
    ["Auto save", "w-[61px]"], ["Laser observation", "w-[108px]"], ["Color observation", "w-[110px]"],
    ["Data acquisition", "w-[100px]"], ["Auto focus", "w-[67px]"], ["Microscope", "w-[72px]"],
  ];
  return (
    <section className={`mt-[3px] flex h-[572px] w-[358px] flex-col border-r border-[#383838] bg-[#4c4c4c] text-white ${ui}`}>
      <PanelHeader className="w-[357px] shrink-0 text-[23.500px] leading-[32px]">
        <Camera crop className="ml-[12px] mt-px h-[30px] w-[44px] opacity-50" />
        <Fit className="ml-[14px] mt-px w-[183px]">Advanced setting</Fit>
        <div className={`-mt-px ml-auto mr-[7px] flex h-6 w-6 items-center justify-center rounded-[4px] border border-[#777] ${barDark}`}>
          <svg viewBox="0 0 14 14" className="h-[13px] w-[13px]">
            <path d="M1 1L13 13M13 1L1 13" stroke="#fff" strokeWidth="2" />
          </svg>
        </div>
      </PanelHeader>
      <ul className="ml-2 mt-[17px]">
        {rows.map(([r, w]) => (
          <li key={r} className="flex h-[18.600px] items-center text-[13.200px] leading-[18px]">
            <svg viewBox="0 0 6 11" className="-mt-[5px] h-[11px] w-[6px]">
              <path d="M0 0L6 5.500L0 11Z" fill="#fff" />
            </svg>
            <Fit className={`ml-2 ${w}`}>{r}</Fit>
          </li>
        ))}
      </ul>
    </section>
  );
}

function Controls() {
  const tile = "flex h-16 w-[104px] items-center justify-center rounded-[6px] border-2 border-[#4a4c98] bg-[linear-gradient(180deg,#1f5296,#10356a)]";
  return (
    <section className="flex w-[752px] shrink-0 flex-col">
      <div className="mt-px flex h-[66px] w-[745px] items-start bg-[linear-gradient(180deg,#a4a4a4_0%,#707070_22%,#464646_48%,#292929_52%,#303030_70%,#606060_100%)] pt-[2px]">
        <div className="flex h-[61px] w-[140px] items-start justify-center rounded-[5px] bg-[linear-gradient(180deg,#527896_0%,#2f5878_48%,#153c58_52%,#245270_100%)]">
          <svg viewBox="0 0 46 48" className="mt-[7px] h-12 w-[46px]">
            <path d="M8 27H37L45 38H0Z" fill="url(#aqua)" />
            <path d="M0 38.500H45" stroke="#d8f0f6" strokeWidth="1.500" />
            <path d="M4 40H42L45 47H0Z" fill="#9cc" opacity=".25" />
            <path d="M9 18L20 28H26L37 18Z" fill="#a9bccc" opacity=".9" />
            <path d="M14 28Q26 28 30 22L26 28L10 34Z" fill="#5c94bc" opacity=".7" />
            <ellipse cx="22.500" cy="12" rx="17.500" ry="11.500" fill="#222" />
            <ellipse cx="22.500" cy="11" rx="16" ry="9.800" fill="url(#bubble)" stroke="#bbb" />
          </svg>
        </div>
        <svg viewBox="0 0 40 58" className="ml-[60px] mt-[2px] h-[58px] w-10">
          <path d="M3 1L37 8V48L3 39Z" fill="url(#pane)" />
          <path d="M3 1L37 8V16L3 8Z" fill="#3f4448" />
          <path d="M24 8L32 10" stroke="#bbb" strokeWidth="2" strokeDasharray="2 1.500" />
          <Wrench x={0} y={12} s={1.05} fill="#c9ced2" />
          <path d="M3 56L37 49V57Z" fill="#8fb8c6" opacity=".5" />
        </svg>
        <svg viewBox="0 0 40 56" className="ml-[107px] mt-[3px] h-14 w-10">
          <path d="M8 1H39L21 33L14 29L8 31Z" fill="#e4e6ec" />
          <path d="M39 1L14 29V34L21 38L39 1Z" fill="#f4f5f9" stroke="#a8adb9" strokeWidth=".7" />
          <path d="M39 1L21 12V38L28 41Z" fill="#e0e3ea" stroke="#a8adb9" strokeWidth=".7" />
          <path d="M39 1L27 7V42L39 34Z" fill="url(#page)" stroke="#a8adb9" strokeWidth=".7" />
          <path d="M8 1H39L8 8ZM39 1L14 8" fill="#fff" stroke="#a8adb9" strokeWidth=".7" />
          <path d="M1 6Q3 22 20 24V18L32 28L22 36V31Q2 28 1 6Z" fill="#a3aed0" stroke="#eef0f8" strokeWidth=".8" />
          <path d="M14 53L20 46L22 50L27 45L29 50L31 45L38 53Z" fill="#bbc" opacity=".5" />
        </svg>
        <svg viewBox="0 0 50 54" className="ml-[102px] mt-[4px] h-[54px] w-[50px]">
          <path d="M1 1L14 6L44 8L49 13L43 13L36 38L8 30Z" fill="url(#aqua)" />
          <path d="M14 6L34 10L36 38L24 34Z" fill="#d9ecf8" opacity=".8" />
          <path d="M1 1L12 6L20 26L8 30Z" fill="#b4f4f4" />
          <circle cx="14" cy="25" r="10.500" fill="none" stroke="#c8ccd4" strokeWidth="5" strokeDasharray="2.300 1.300" />
          <circle cx="14" cy="25" r="8.500" fill="#d2d5dc" />
          <circle cx="14" cy="25" r="3.500" fill="#222" stroke="#fff" strokeWidth="1.500" />
          <path d="M5 51L37 40L35 53Z" fill="#8fb8c6" opacity=".5" />
        </svg>
      </div>
      <div className="flex h-[67px] w-[747px] items-start gap-[5.500px] bg-[#333] pl-[5px]">
        <div className={`${tile} pl-[17px]`}><Folder fill="rainbow" className="h-[59px] w-[63px]" /></div>
        <div className={`${tile} pl-[17px]`}><Folder fill="mono" className="h-[59px] w-[63px]" /></div>
        <div className={tile}>
          <Folder fill="pane" className="h-[59px] w-[63px]">
            <path d="M20 15.500V47" stroke="#20405a" />
            <text x="11" y="42" fill="#e4f4fa" className="font-['Liberation_Sans',sans-serif] text-[31px] font-bold">2</text>
          </Folder>
        </div>
        <div className="mt-px flex h-[62px] w-[107px] items-center rounded-[6px] border border-[#333c4e] bg-[#2c3138] pl-[31px]">
          <Folder fill="pane" shadow={false} className="h-[58px] w-[63px] shrink-0 opacity-45">
            <Wrench x={8} y={18} s={0.85} fill="#ddd" />
          </Folder>
          <svg viewBox="0 0 12 12" className="-ml-[8px] mt-9 h-3 w-3 shrink-0">
            <path d="M0 0H11L5.500 12Z" fill="#8d8d8d" />
          </svg>
        </div>
      </div>
      <div className="mt-1 flex">
        <div className="ml-[7px] flex w-[370px] flex-col gap-1">
          <Magnification />
          <Acquisition />
          <div className={`flex h-[72px] w-[369px] items-center rounded-[5px] border-2 border-[#8f8f8f] bg-[linear-gradient(180deg,#f6f6f4_0%,#dededb_30%,#b5b3b0_52%,#d0cfcc_68%,#fafafa_100%)] shadow-[3px_4px_7px_rgba(0,0,0,0.7)] ${ui}`}>
            <Camera className="ml-[19px] h-[62px] w-[68px]" />
            <Fit className="ml-[59px] mt-[2px] w-[158px] text-[31px] leading-[40px] text-black">Acquisition</Fit>
          </div>
        </div>
        <div className="ml-[9px] w-[358px]">
          <ImageInfo />
          <Advanced />
        </div>
      </div>
    </section>
  );
}

function StatusBar() {
  return (
    <footer className={`flex h-[25px] shrink-0 border-t border-black bg-[linear-gradient(180deg,#a2a2a2_0%,#9a9a9a_20%,#666_55%,#585858_70%,#707070_100%)] text-[12px] leading-[20px] text-white ${ui}`}>
      <div className="flex w-[151px] items-center border-r border-[#b0b0b0] pb-px pl-[27px]">
        <div className="h-[11px] w-[11px] border border-[#ddd]" />
        <Fit className="ml-[10px] w-[97px]">1281 x 1280 µm</Fit>
      </div>
      <div className="w-[119px] border-r border-[#b0b0b0]" />
      <div className="w-[140px] border-r border-[#b0b0b0]" />
      <div className="w-[117px] border-r border-[#b0b0b0]" />
      <div className="w-[119px] border-r border-[#b0b0b0]" />
      <div className="w-[113px] border-r border-[#b0b0b0]" />
    </footer>
  );
}

export default function App() {
  return (
    <div className="relative flex h-[1200px] w-[1920px] flex-col overflow-hidden bg-[linear-gradient(90deg,transparent_1545px,#333_1556px,#333_1914px,#000_1915px),linear-gradient(180deg,transparent_0px,transparent_500px,#333_1050px),linear-gradient(100deg,#5fd8ff_0px,#5fd8ff_25px,#0070a8_140px,#10608c_330px,#1f4c62_620px,#24424e_1300px)]">
      <Defs />
      <Header />
      <main className="flex h-[1127px] shrink-0">
        <Rail />
        <Workspace />
        <Accessory />
        <Controls />
      </main>
      <StatusBar />
    </div>
  );
}
